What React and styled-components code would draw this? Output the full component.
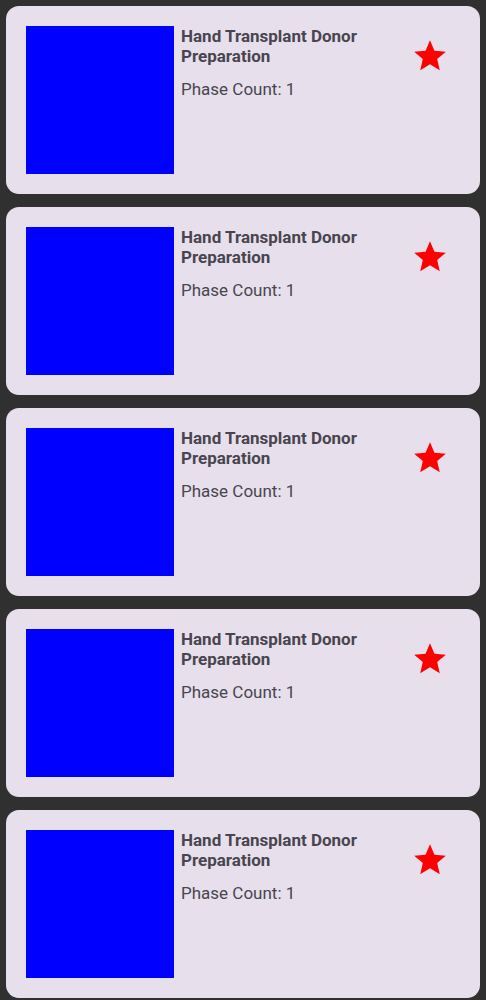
import React from 'react';
import styled, { createGlobalStyle } from 'styled-components';

const GlobalStyle = createGlobalStyle`
  html, body {
    margin: 0;
    padding: 0;
    background: #303030;
    font-family: Roboto, "Noto Sans", sans-serif;
  }
`;

const List = styled.div`
  display: flex;
  flex-direction: column;
  gap: 13px;
  padding: 6px;
`;

const Card = styled.div`
  display: flex;
  flex-direction: row;
  align-items: flex-start;
  gap: 7px;
  padding: 20px;
  background: #e7e0ec;
  border-radius: 13px;
`;

const Thumb = styled.div`
  width: 148px;
  height: 148px;
  flex-shrink: 0;
  background: ${(props) => props.color};
`;

const Info = styled.div`
  flex: 1;
  display: flex;
  flex-direction: column;
  color: #49454f;
`;

const Title = styled.div`
  font-size: 17px;
  font-weight: 700;
  line-height: 20px;
  max-width: 200px;
`;

const Meta = styled.div`
  font-size: 17px;
  line-height: 24px;
  margin-top: 11px;
`;

const Fav = styled.svg`
  width: 38px;
  height: 38px;
  margin-top: 11px;
  margin-right: 11px;
  flex-shrink: 0;
  fill: ${(props) => (props.active ? '#ff0000' : 'transparent')};
`;

const procedures = [1, 2, 3, 4, 5].map((n) => ({
  id: n,
  title: 'Hand Transplant Donor Preparation',
  phases: 1,
  favorite: true,
}));

export default function App() {
  return (
    <>
      <GlobalStyle />
      <List>
        {procedures.map((p) => (
          <Card key={p.id}>
            <Thumb color="#0000ff" />
            <Info>
              <Title>{p.title}</Title>
              <Meta>Phase Count: {p.phases}</Meta>
            </Info>
            <Fav viewBox="0 0 24 24" active={p.favorite ? 1 : 0}>
              <path d="M12 17.27L18.18 21l-1.64-7.03L22 9.24l-7.19-.61L12 2 9.19 8.63 2 9.24l5.46 4.73L5.82 21z" />
            </Fav>
          </Card>
        ))}
      </List>
    </>
  );
}
